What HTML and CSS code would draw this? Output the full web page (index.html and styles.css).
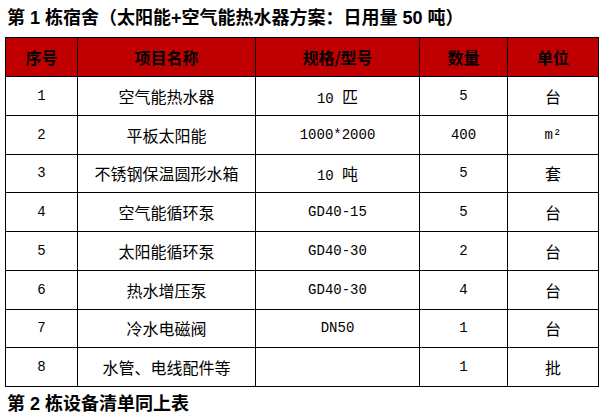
FILE: index.html
```html
<!DOCTYPE html>
<html lang="zh">
<head>
<meta charset="utf-8">
<link rel="stylesheet" href="styles.css">
</head>
<body>
<div class="title">第 1 栋宿舍（太阳能+空气能热水器方案：日用量 50 吨）</div>
<table class="list">
  <colgroup>
    <col class="c1"><col class="c2"><col class="c3"><col class="c4"><col class="c5">
  </colgroup>
  <thead>
    <tr><th>序号</th><th>项目名称</th><th>规格/型号</th><th>数量</th><th>单位</th></tr>
  </thead>
  <tbody>
    <tr><td class="n">1</td><td>空气能热水器</td><td><span class="n">10 </span>匹</td><td class="n">5</td><td>台</td></tr>
    <tr><td class="n">2</td><td>平板太阳能</td><td class="n">1000*2000</td><td class="n">400</td><td class="n">m²</td></tr>
    <tr><td class="n">3</td><td>不锈钢保温圆形水箱</td><td><span class="n">10 </span>吨</td><td class="n">5</td><td>套</td></tr>
    <tr><td class="n">4</td><td>空气能循环泵</td><td class="n">GD40-15</td><td class="n">5</td><td>台</td></tr>
    <tr><td class="n">5</td><td>太阳能循环泵</td><td class="n">GD40-30</td><td class="n">2</td><td>台</td></tr>
    <tr><td class="n">6</td><td>热水增压泵</td><td class="n">GD40-30</td><td class="n">4</td><td>台</td></tr>
    <tr><td class="n">7</td><td>冷水电磁阀</td><td class="n">DN50</td><td class="n">1</td><td>台</td></tr>
    <tr><td class="n">8</td><td>水管、电线配件等</td><td></td><td class="n">1</td><td>批</td></tr>
  </tbody>
</table>
<div class="title second">第 2 栋设备清单同上表</div>
</body>
</html>
```

FILE: styles.css
```css
html, body {
  margin: 0;
  padding: 0;
  background: #ffffff;
}
body {
  width: 606px;
  height: 418px;
  overflow: hidden;
  font-family: "Liberation Sans", "Noto Sans CJK SC", sans-serif;
  color: #000;
}
.title {
  height: 37px;
  line-height: 37px;
  padding-left: 7px;
  font-size: 18px;
  font-weight: bold;
  white-space: nowrap;
}
.title.second {
  height: 32px;
  line-height: 34px;
}
.list {
  margin-left: 5px;
  width: 593px;
  border-collapse: collapse;
  table-layout: fixed;
}
.c1 { width: 72px; }
.c2 { width: 178px; }
.c3 { width: 164px; }
.c4 { width: 88px; }
.c5 { width: 91px; }
.list th, .list td {
  border: 1px solid #000;
  text-align: center;
  padding: 0;
  white-space: nowrap;
}
.list th {
  background: #c00000;
  height: 38px;
  font-size: 16px;
  font-weight: bold;
  font-family: "Noto Sans CJK SC", sans-serif;
}
.list td {
  height: 37.75px;
  font-size: 16px;
  font-family: "Noto Sans CJK SC", sans-serif;
}
.list .n {
  font-family: "Liberation Mono", monospace;
  font-size: 14px;
}
```
